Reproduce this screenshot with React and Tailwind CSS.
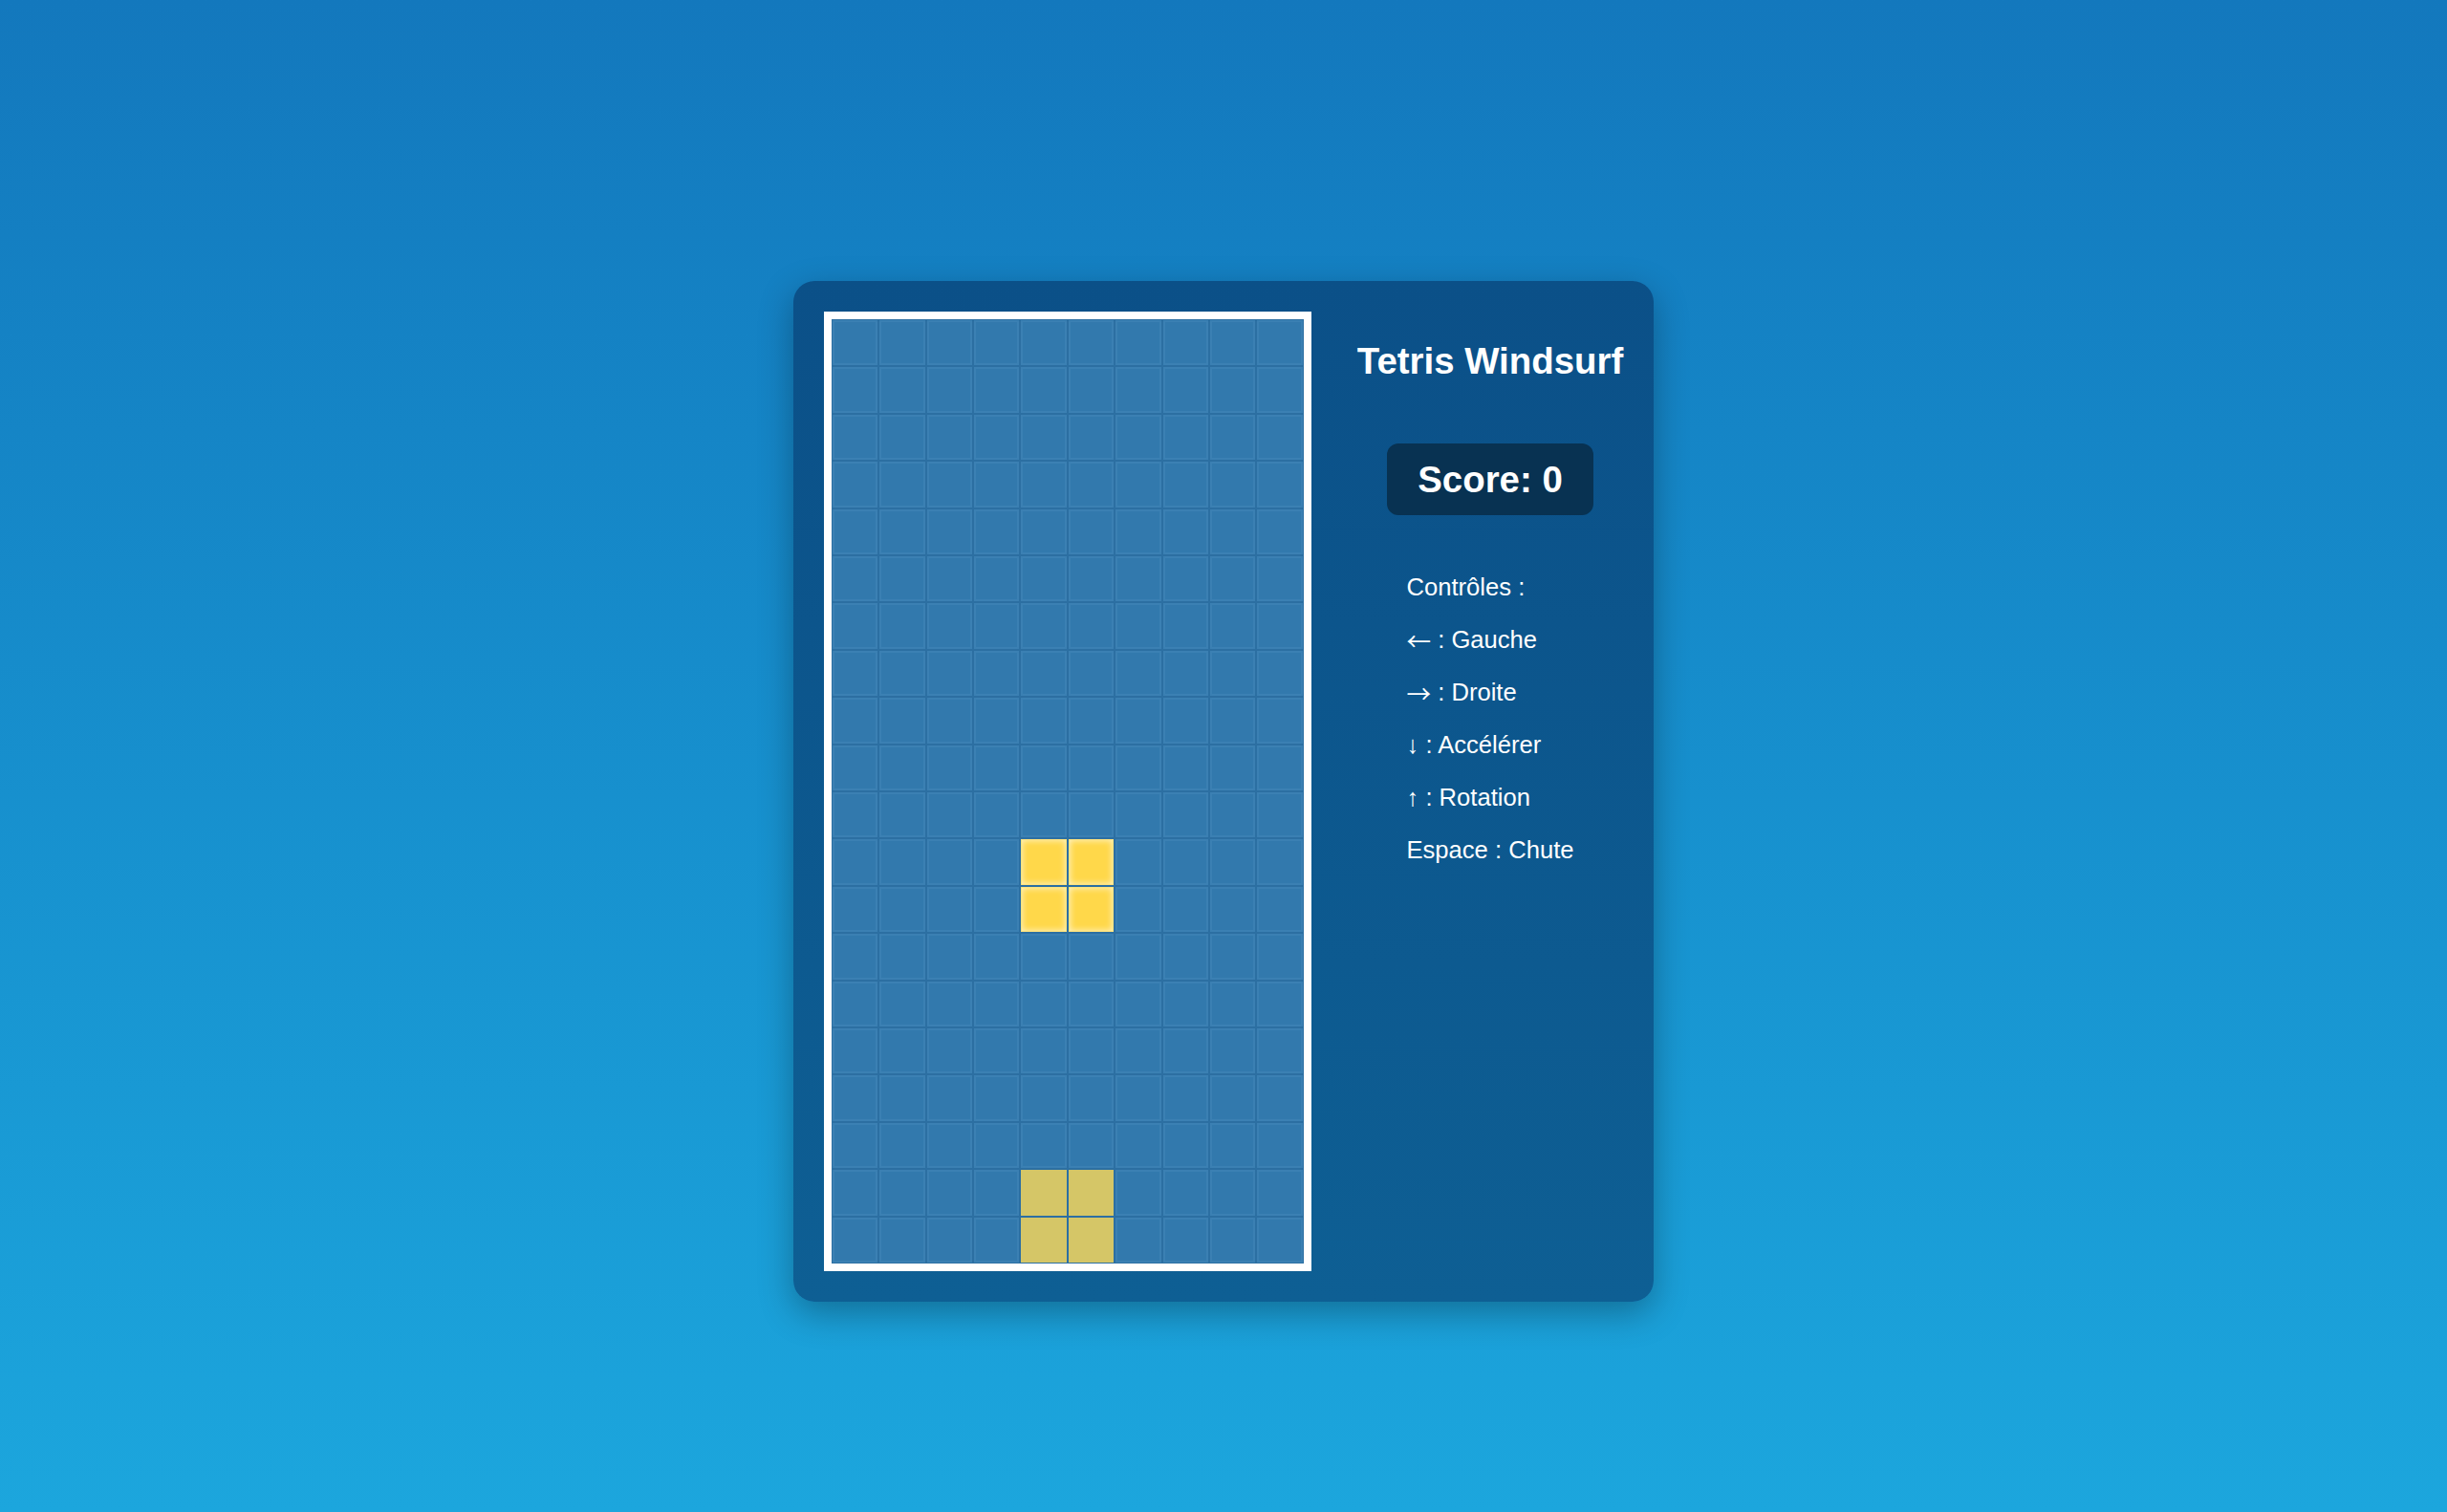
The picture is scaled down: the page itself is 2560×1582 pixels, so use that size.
import React from 'react';

const COLS = 10;
const ROWS = 20;

// falling piece and the one already landed
const active = [[11, 4], [11, 5], [12, 4], [12, 5]];
const landed = [[18, 4], [18, 5], [19, 4], [19, 5]];

const has = (list, r, c) => list.some(([pr, pc]) => pr === r && pc === c);

const Cell = ({ r, c }) => {
  if (has(active, r, c)) {
    return (
      <div className="p-px">
        <div className="h-full w-full border border-[#ffe37e] bg-[#ffd84a] shadow-[inset_0_0_7px_rgba(255,255,255,0.75)]" />
      </div>
    );
  }
  if (has(landed, r, c)) {
    return (
      <div className="p-px">
        <div className="h-full w-full bg-[#d5c667]" />
      </div>
    );
  }
  return (
    <div className="p-px">
      <div className="h-full w-full border-2 border-[#3b80b3] bg-[#3279ad]" />
    </div>
  );
};

const Board = () => {
  const cells = [];
  for (let r = 0; r < ROWS; r++) {
    for (let c = 0; c < COLS; c++) {
      cells.push(<Cell key={`${r}-${c}`} r={r} c={c} />);
    }
  }
  return (
    <div className="border-[8px] border-white bg-[#2c6fa2]">
      <div className="grid h-[988px] w-[494px] grid-cols-10 grid-rows-[repeat(20,minmax(0,1fr))]">
        {cells}
      </div>
    </div>
  );
};

// arrows in a CJK face: thin, long strokes like the reference; leading-[0] keeps the line height
const Arrow = ({ children }) => (
  <span className="align-[-3px] font-['Noto_Sans_CJK_JP',sans-serif] leading-[0]">{children}</span>
);

export default function App() {
  return (
    <div className="flex min-h-screen w-full justify-center bg-gradient-to-b from-[#1378bd] to-[#1ca6dd] pt-[294px] font-['Liberation_Sans',Arial,sans-serif] text-white">
      <div className="flex h-fit gap-[48px] rounded-[22px] bg-gradient-to-b from-[#0b5088] to-[#0e5f94] p-[32px] shadow-[0_12px_36px_rgba(0,0,0,0.3)]">
        <Board />
        <div className="flex flex-col items-center text-center">
          <h1 className="mt-[30px] text-[38.4px] font-bold leading-[44px]">Tetris Windsurf</h1>
          <div className="mt-[64px] rounded-[12px] bg-[#083252] px-[32px] py-[16px] text-[38.4px] font-bold leading-[43px]">
            Score: 0
          </div>
          <div className="mt-[61px] flex flex-col gap-[25.6px] text-left text-[25.6px] leading-[29.4px]">
            <p>Contrôles :</p>
            <p><Arrow>←</Arrow> : Gauche</p>
            <p><Arrow>→</Arrow> : Droite</p>
            <p>↓ : Accélérer</p>
            <p>↑ : Rotation</p>
            <p>Espace : Chute</p>
          </div>
        </div>
      </div>
    </div>
  );
}
